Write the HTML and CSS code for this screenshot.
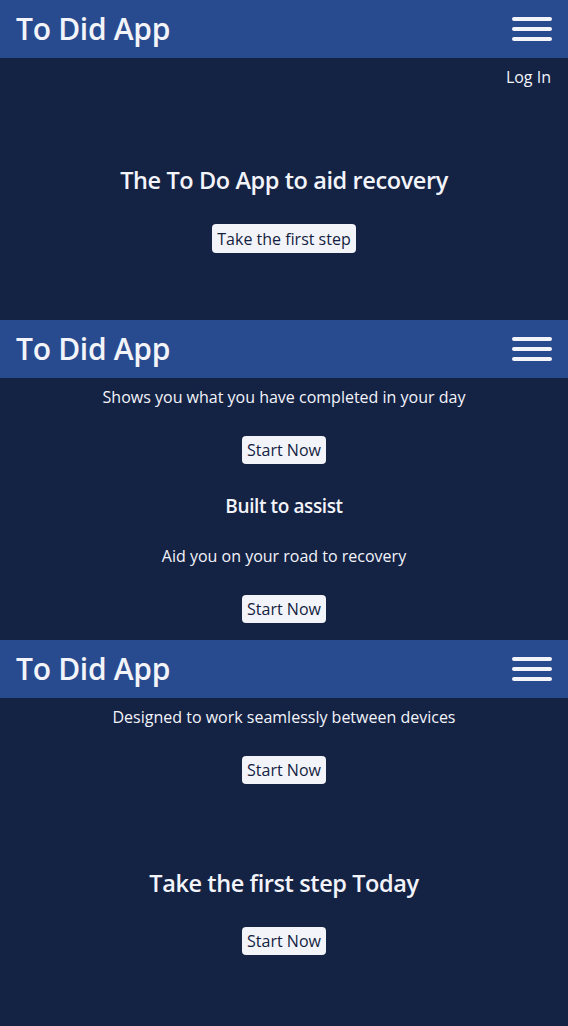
FILE: index.html
```html
<!DOCTYPE html>
<html lang="en">
<head>
<meta charset="utf-8">
<title>To Did App</title>
<link rel="stylesheet" href="styles.css">
</head>
<body>
<section class="screen screen-one">
  <header class="topbar">
    <h1 class="brand">To Did App</h1>
    <button class="menu" aria-label="Menu"><span></span><span></span><span></span></button>
  </header>
  <div class="login-row"><a class="login" href="#">Log In</a></div>
  <div class="hero">
    <h2 class="big-heading">The To Do App to aid recovery</h2>
    <button class="cta cta-tall">Take the first step</button>
  </div>
</section>
<section class="screen screen-two">
  <header class="topbar">
    <h1 class="brand">To Did App</h1>
    <button class="menu" aria-label="Menu"><span></span><span></span><span></span></button>
  </header>
  <div class="feature">
    <p class="feature-text">Shows you what you have completed in your day</p>
    <button class="cta">Start Now</button>
    <h3 class="small-heading">Built to assist</h3>
    <p class="feature-text">Aid you on your road to recovery</p>
    <button class="cta">Start Now</button>
  </div>
</section>
<section class="screen screen-three">
  <header class="topbar">
    <h1 class="brand">To Did App</h1>
    <button class="menu" aria-label="Menu"><span></span><span></span><span></span></button>
  </header>
  <div class="feature">
    <p class="feature-text">Designed to work seamlessly between devices</p>
    <button class="cta">Start Now</button>
  </div>
  <div class="closing">
    <h2 class="big-heading">Take the first step Today</h2>
    <button class="cta">Start Now</button>
  </div>
</section>
</body>
</html>
```
FILE: styles.css
```css
* { box-sizing: border-box; }
html, body {
  margin: 0;
  padding: 0;
  background: #142244;
  color: #f3f4fa;
  font-family: "Open Sans", "Noto Sans", sans-serif;
}
.screen {
  display: flex;
  flex-direction: column;
  align-items: center;
}
.screen-one, .screen-two { height: 320px; }
.screen-three { height: 386px; }
.topbar {
  width: 100%;
  height: 58px;
  flex: none;
  background: #284b8f;
  display: flex;
  align-items: center;
  justify-content: space-between;
  padding: 0 16px;
}
.brand {
  margin: 0;
  font-size: 30px;
  font-weight: 600;
  letter-spacing: -0.3px;
  color: #f3f4fa;
  line-height: 1;
}
.menu {
  width: 40px;
  height: 24px;
  padding: 0;
  border: 0;
  background: transparent;
  display: flex;
  flex-direction: column;
  justify-content: space-between;
}
.menu span {
  display: block;
  height: 4px;
  width: 40px;
  border-radius: 2px;
  background: #f3f4fa;
}
.login-row {
  width: 100%;
  display: flex;
  justify-content: flex-end;
  padding: 8px 17px 0;
}
.login {
  color: #f3f4fa;
  text-decoration: none;
  font-size: 16px;
  line-height: 22px;
}
.hero {
  display: flex;
  flex-direction: column;
  align-items: center;
  padding-top: 77px;
}
.big-heading {
  margin: 0;
  font-size: 23.5px;
  font-weight: 600;
  letter-spacing: -0.4px;
  line-height: 30px;
}
.hero .cta { margin-top: 29px; }
.cta {
  font-family: inherit;
  font-size: 16px;
  line-height: 20px;
  color: #141e3f;
  background: #f3f4fa;
  border: 0;
  border-radius: 4px;
  padding: 4px 5px;
  height: 28px;
}
.cta-tall { height: 29px; }
.feature {
  display: flex;
  flex-direction: column;
  align-items: center;
}
.feature-text {
  margin: 8px 0 0;
  font-size: 16px;
  line-height: 22px;
}
.feature .cta { margin-top: 28px; }
.small-heading {
  margin: 30px 0 0;
  font-size: 19px;
  font-weight: 600;
  line-height: 24px;
  letter-spacing: -0.4px;
}
.small-heading + .feature-text { margin-top: 27px; }
.closing {
  display: flex;
  flex-direction: column;
  align-items: center;
  padding-top: 84px;
}
.closing .cta { margin-top: 29px; }
```
